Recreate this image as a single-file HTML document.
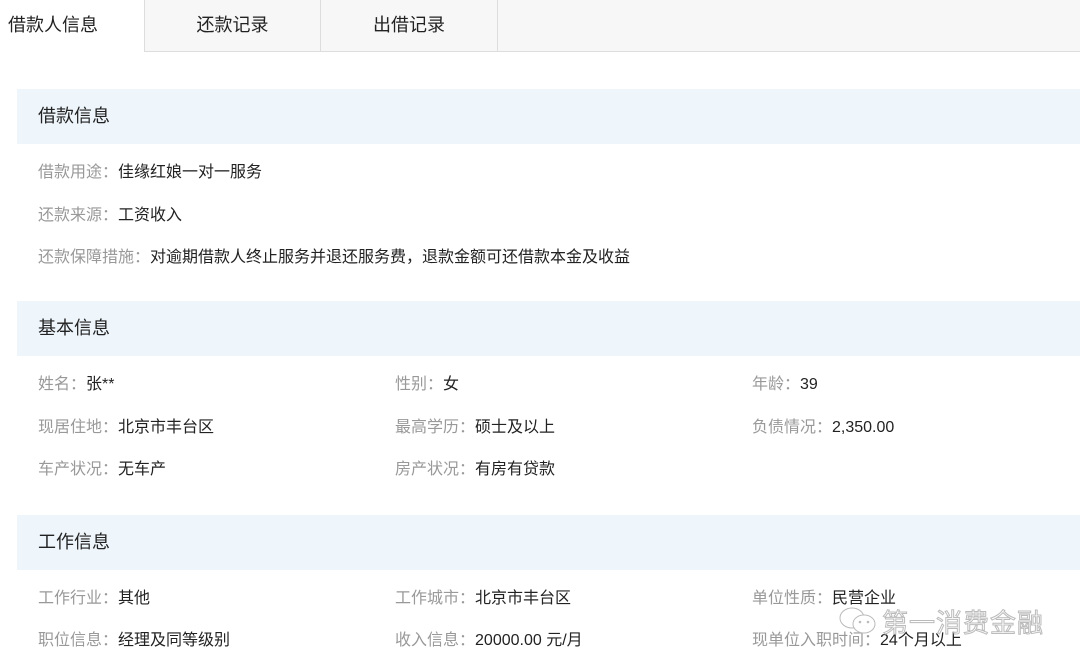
<!DOCTYPE html>
<html><head><meta charset="utf-8"><style>
*{margin:0;padding:0;box-sizing:border-box}
body{width:1080px;height:668px;overflow:hidden;background:#fff;font-family:"Liberation Sans","Noto Sans CJK SC",sans-serif;color:#333;position:relative}
.tab{position:absolute;top:0;height:52px;line-height:50px;font-size:18px;text-align:center;background:#f7f7f7;border-left:1px solid #ddd;border-bottom:1px solid #ddd;color:#222}
.hd{position:absolute;left:17px;right:0;height:55px;background:#eef6fc;font-size:18px;line-height:55px;padding-left:21px;color:#222}
.r{position:absolute;font-size:16px;line-height:20px;white-space:nowrap;color:#222}
.r span{color:#999}
.wm{position:absolute;left:840px;top:603px;font-size:26px;color:#fff;-webkit-text-stroke:1px #bbb;letter-spacing:1px}
</style></head><body>
<div class="tab" style="left:0;width:144px;background:#fff;border:none;text-align:left;padding-left:8px">借款人信息</div>
<div class="tab" style="left:144px;width:176px">还款记录</div>
<div class="tab" style="left:320px;width:177px">出借记录</div>
<div class="tab" style="left:497px;width:583px"></div>

<div class="hd" style="top:89px">借款信息</div>
<div class="r" style="left:38px;top:163px"><span>借款用途：</span>佳缘红娘一对一服务</div>
<div class="r" style="left:38px;top:206px"><span>还款来源：</span>工资收入</div>
<div class="r" style="left:38px;top:248px"><span>还款保障措施：</span>对逾期借款人终止服务并退还服务费，退款金额可还借款本金及收益</div>

<div class="hd" style="top:301px">基本信息</div>
<div class="r" style="left:38px;top:375px"><span>姓名：</span>张**</div>
<div class="r" style="left:395px;top:375px"><span>性别：</span>女</div>
<div class="r" style="left:752px;top:375px"><span>年龄：</span>39</div>
<div class="r" style="left:38px;top:418px"><span>现居住地：</span>北京市丰台区</div>
<div class="r" style="left:395px;top:418px"><span>最高学历：</span>硕士及以上</div>
<div class="r" style="left:752px;top:418px"><span>负债情况：</span>2,350.00</div>
<div class="r" style="left:38px;top:460px"><span>车产状况：</span>无车产</div>
<div class="r" style="left:395px;top:460px"><span>房产状况：</span>有房有贷款</div>

<div class="hd" style="top:515px">工作信息</div>
<div class="r" style="left:38px;top:589px"><span>工作行业：</span>其他</div>
<div class="r" style="left:395px;top:589px"><span>工作城市：</span>北京市丰台区</div>
<div class="r" style="left:752px;top:589px"><span>单位性质：</span>民营企业</div>
<div class="r" style="left:38px;top:631px"><span>职位信息：</span>经理及同等级别</div>
<div class="r" style="left:395px;top:631px"><span>收入信息：</span>20000.00 元/月</div>
<div class="r" style="left:752px;top:631px"><span>现单位入职时间：</span>24个月以上</div>

<svg style="position:absolute;left:838px;top:606px" width="42" height="30" viewBox="0 0 42 30"><ellipse cx="14" cy="12" rx="12" ry="10" fill="#fff" stroke="#bbb"/><ellipse cx="26" cy="18" rx="11" ry="9" fill="#fff" stroke="#bbb"/><circle cx="22" cy="16" r="1.3" fill="#bbb"/><circle cx="30" cy="16" r="1.3" fill="#bbb"/></svg>
<div class="wm" style="left:882px">第一消费金融</div>
</body></html>
